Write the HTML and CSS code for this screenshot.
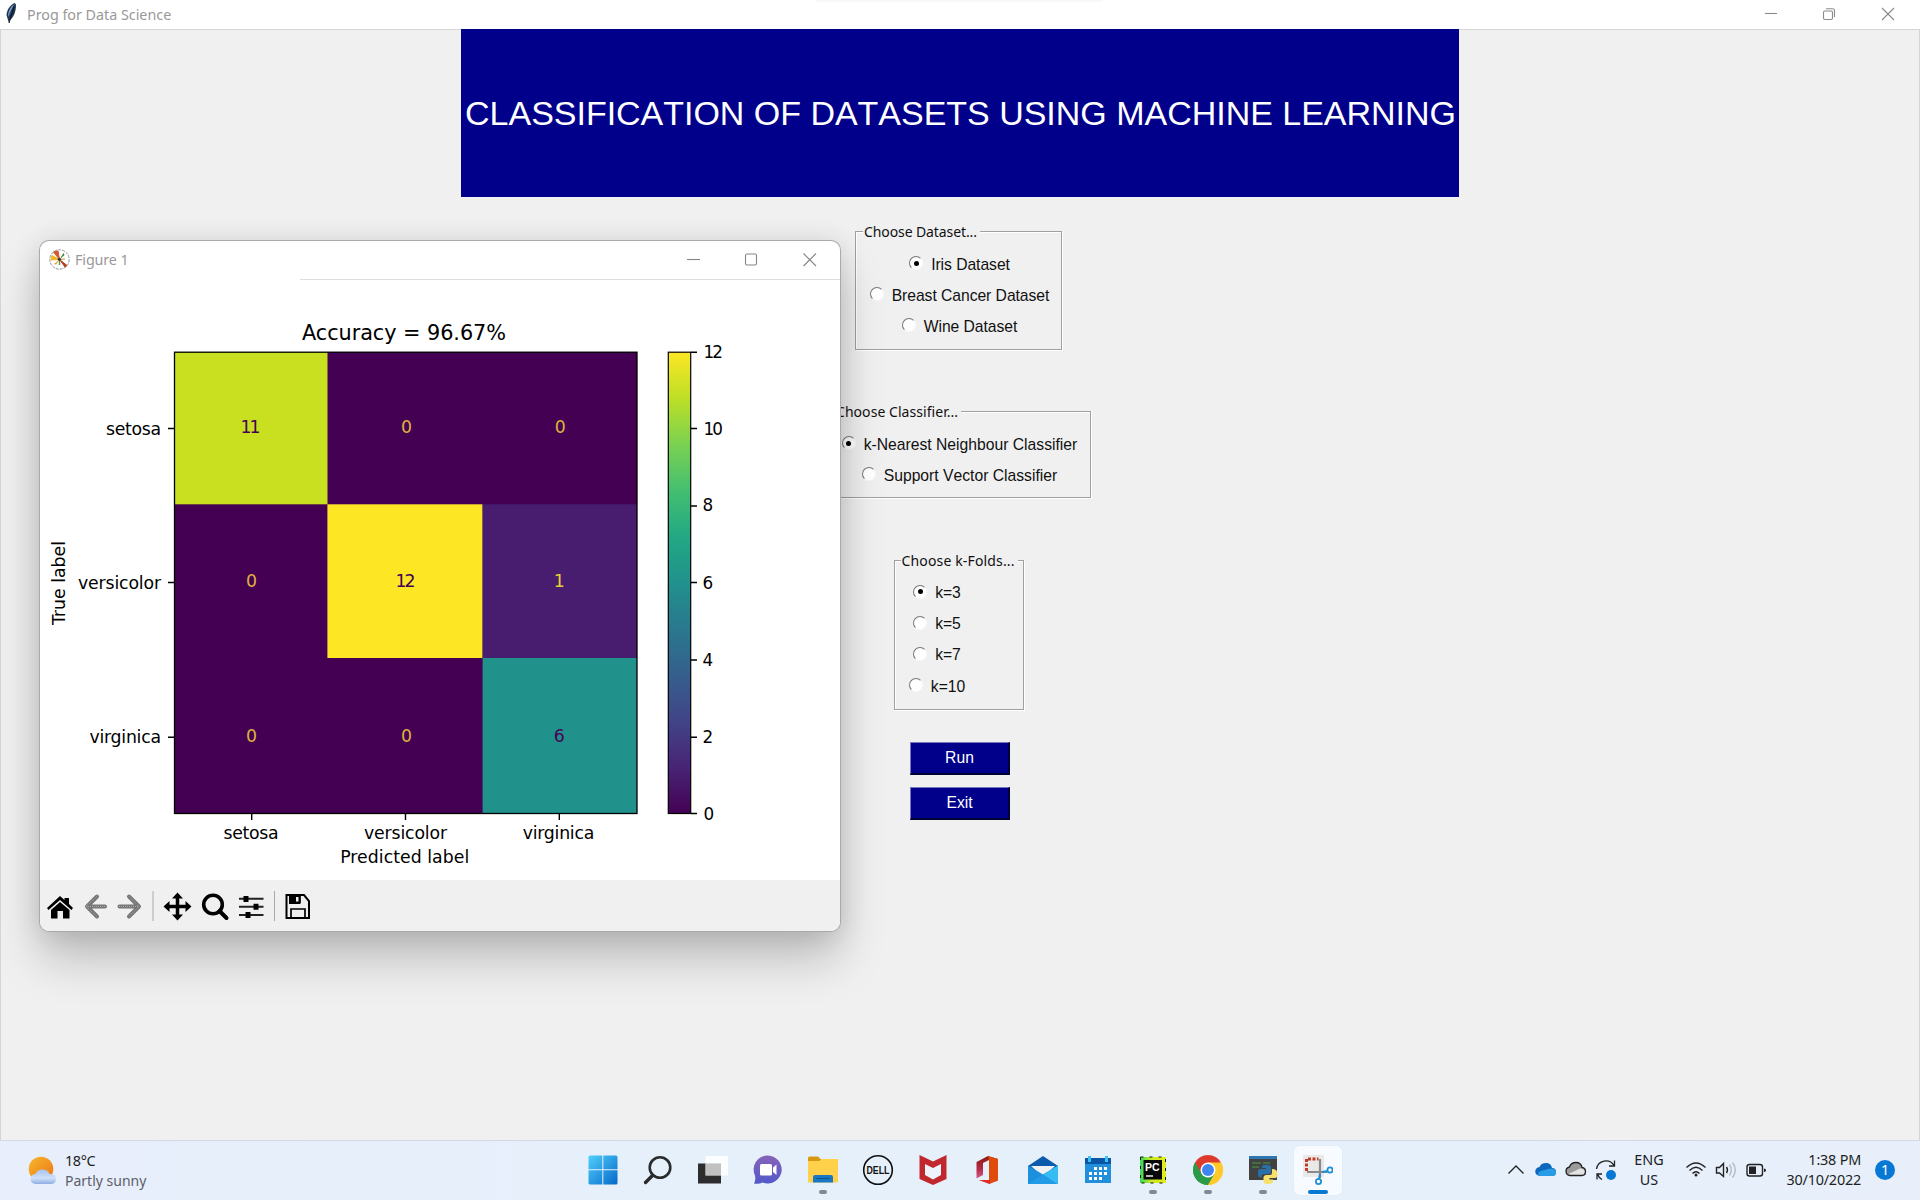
FILE: index.html
```html
<!DOCTYPE html>
<html lang="en">
<head>
<meta charset="utf-8">
<title>Prog for Data Science</title>
<link rel="stylesheet" href="styles.css">
</head>
<body>
<div class="desktop">
  <header class="titlebar">
    <svg class="feather" width="13" height="22" viewBox="0 0 13 22"><path d="M10 1C6 2 2 7 1.500 13L3 18L4 21L5 18C9 15 11 9 11 3Z" fill="#24364f"/><path d="M9.500 2C5 5 3 10 3 15C5 12 6 7 9.500 2Z" fill="#6fa3d8"/><path d="M9 5L4 21" stroke="#0d131c" stroke-width="1"/></svg>
    <span class="title-text app-name">Prog for Data Science</span>
    <svg class="win-controls" width="140" height="29" viewBox="0 0 140 29" fill="none" stroke="#8a8a8a" stroke-width="1.100">
      <path d="M5 13.500H17"/><rect x="63.500" y="11" width="9" height="8.500" rx="1.500"/><path d="M66 8.700H72.500Q74.500 8.700 74.500 10.700V17"/><path d="M122 8L134 20M134 8L122 20"/>
    </svg>
    <div class="top-peek"></div>
  </header>

  <main class="app">
    <h1 class="banner"><span>CLASSIFICATION OF DATASETS USING MACHINE LEARNING</span></h1>

    <section class="group dataset">
      <h2><span>Choose Dataset...</span></h2>
      <div class="option"><i class="radio on"></i><span>Iris Dataset</span></div>
      <div class="option"><i class="radio"></i><span>Breast Cancer Dataset</span></div>
      <div class="option"><i class="radio"></i><span>Wine Dataset</span></div>
    </section>
    <section class="group classifier">
      <h2><span>Choose Classifier...</span></h2>
      <div class="option"><i class="radio on"></i><span>k-Nearest Neighbour Classifier</span></div>
      <div class="option"><i class="radio"></i><span>Support Vector Classifier</span></div>
    </section>
    <section class="group folds">
      <h2><span>Choose k-Folds...</span></h2>
      <div class="option"><i class="radio on"></i><span>k=3</span></div>
      <div class="option"><i class="radio"></i><span>k=5</span></div>
      <div class="option"><i class="radio"></i><span>k=7</span></div>
      <div class="option"><i class="radio"></i><span>k=10</span></div>
    </section>
    <button class="action run">Run</button>
    <button class="action exit">Exit</button>
  </main>

  <section class="figure-window">
    <div class="figure-title">
      <svg class="mpl" width="21" height="21" viewBox="0 0 21 21"><circle cx="10.500" cy="10.500" r="9.700" fill="#fff" stroke="#777" stroke-width=".8" stroke-dasharray="3 1"/><path d="M10.500 10.500L4.500 3L9 2Z" fill="#d5572b" stroke="#d5572b"/><path d="M10.500 10.500L2 11L3 6.500Z" fill="#edb628" stroke="#edb628"/><path d="M10.500 10.500L16 18L18 16.500Z" fill="#b83f20" stroke="#b83f20"/><path d="M10.500 10.500L14.500 4L15.500 6Z" fill="#3e7b36"/><path d="M10.500 10.500L5 15L7 15.500Z" fill="#e19b22"/><path d="M10.500 10.500V16" stroke="#49964b" stroke-width="1.400"/><path d="M10.500 10.500L16 10" stroke="#b69c35"/><circle cx="10.300" cy="10.300" r="1.500" fill="#333"/></svg>
      <span class="title-text fig-name">Figure 1</span>
      <svg class="win-controls" width="140" height="38" viewBox="0 0 140 38" fill="none" stroke="#858585" stroke-width="1.100"><path d="M3 19.500H16"/><rect x="61.500" y="14" width="11" height="11" rx="1.500"/><path d="M119.500 13.500L132 26M132 13.500L119.500 26"/></svg>
    </div>
    <svg class="plot" width="800" height="600" viewBox="40 280 800 600">
      <defs><linearGradient id="viridis" x1="0" y1="1" x2="0" y2="0">
        <stop offset="0" stop-color="#440154"/><stop offset=".1" stop-color="#482475"/><stop offset=".2" stop-color="#414487"/><stop offset=".3" stop-color="#355f8d"/><stop offset=".4" stop-color="#2a788e"/><stop offset=".5" stop-color="#21918c"/><stop offset=".6" stop-color="#22a884"/><stop offset=".7" stop-color="#44bf70"/><stop offset=".8" stop-color="#7ad151"/><stop offset=".9" stop-color="#bddf26"/><stop offset="1" stop-color="#fde725"/>
      </linearGradient></defs>
      <rect x="174.500" y="352" width="462.500" height="461.500" fill="#440154"/>
      <rect x="174.500" y="352" width="153" height="152.300" fill="#c8e020"/>
      <rect x="327.400" y="504.300" width="155.200" height="153.700" fill="#fde725"/>
      <rect x="482.600" y="504.300" width="154.400" height="153.700" fill="#481d6f"/>
      <rect x="482.600" y="658" width="154.400" height="155.500" fill="#21918c"/>
      <rect x="174.500" y="352.200" width="462.500" height="461.300" fill="none" stroke="#000" stroke-width="1.300"/>
      <rect x="668.300" y="352.200" width="22.400" height="461.300" fill="url(#viridis)" stroke="#000" stroke-width="1.200"/>
      <path d="M168 428.500H174M168 582.500H174M168 737.300H174M251.700 814V820M405.500 814V820M559.300 814V820M691 352.300H697M691 428.500H697M691 506H697M691 582.500H697M691 660H697M691 737.300H697M691 813.500H697" stroke="#000" stroke-width="1.400"/>
      <text class="p-title" x="404" y="339.800" text-anchor="middle" textLength="204">Accuracy = 96.67%</text>
      <g class="p-text" text-anchor="end">
        <text x="161" y="435.300" textLength="55">setosa</text><text x="161" y="589" textLength="83">versicolor</text><text x="161" y="743" textLength="71.500">virginica</text>
      </g>
      <g class="p-text" text-anchor="middle">
        <text x="251" y="839.400" textLength="55">setosa</text><text x="405.500" y="839.400" textLength="83">versicolor</text><text x="558.500" y="839.400" textLength="71.500">virginica</text>
        <text x="404.700" y="863" textLength="129">Predicted label</text>
        <text transform="translate(65 583) rotate(-90)" textLength="84">True label</text>
      </g>
      <g class="p-text tick">
        <text x="703.500" y="358" textLength="19.500">12</text><text x="703.500" y="435" textLength="19.500">10</text><text x="702.500" y="511.300">8</text><text x="702.500" y="588.700">6</text><text x="702.500" y="666">4</text><text x="702.500" y="743">2</text><text x="703.500" y="820">0</text>
      </g>
      <g class="p-text" text-anchor="middle">
        <g fill="#440154"><text x="250.500" y="433" textLength="20">11</text><text x="405.500" y="587" textLength="20">12</text><text x="559.300" y="742">6</text></g>
        <g fill="#fde725"><text class="zero" x="406.500" y="433">0</text><text class="zero" x="560.300" y="433">0</text><text class="zero" x="251.500" y="587">0</text><text class="one" x="559.300" y="587">1</text><text class="zero" x="251.500" y="742">0</text><text class="zero" x="406.500" y="742">0</text></g>
      </g>
    </svg>
    <svg class="toolbar" width="800" height="51" viewBox="40 880 800 51">
      <path d="M47 908L60 896L64.500 900V898H69V904L73 908L71.500 910L60 900L48.500 910Z M51 910L60 902L69.500 910V918.500H63V911H57.500V918.500H51Z"/>
      <g fill="none" stroke="#777" stroke-width="4" stroke-linecap="round" stroke-linejoin="round"><path d="M105 906.500H87M97 896.500L87 906.500L97 916.500M119.500 906.500H138M129 896.500L139 906.500L129 916.500"/></g>
      <g fill="none" stroke="#aaa" stroke-width="1" stroke-dasharray="1 1"><path d="M105 906.500H86M97 896.500L86 906.500L97 916.500M119 906.500H139M129 896.500L139 906.500L129 916.500"/></g>
      <path d="M153 891V921M274.500 891V921" stroke="#aaa"/>
      <path d="M166 906.500H189M177.500 895V918" stroke="#000" stroke-width="3.500"/><path d="M177.500 892.500L183 898.500H172ZM177.500 920.500L183 914.500H172ZM163.500 906.500L169.500 901V912ZM191.500 906.500L185.500 901V912Z"/>
      <circle cx="213" cy="904.500" r="9.300" fill="none" stroke="#000" stroke-width="3.600"/><path d="M219.500 911L226.500 918" stroke="#000" stroke-width="4" stroke-linecap="round"/>
      <path d="M239 898.800H263.500M239 906.800H263.500M239 915H263.500" stroke="#222" stroke-width="1.900"/><path d="M243.500 896h5v6h-5zM253.500 903.800h5v6h-5zM245.500 912h5v6h-5z"/>
      <path d="M286.500 895H304L309 901V918H286.500Z" fill="none" stroke="#000" stroke-width="2"/><path d="M289 895H300V904H289Z"/><path d="M296 897H298.500V901.500H296Z" fill="#eee"/><path d="M300 896V903.500M291 918V909H305V918" fill="none" stroke="#000" stroke-width="1.700"/>
    </svg>
  </section>

  <footer class="taskbar">
    <div class="weather">
      <svg width="30" height="32" viewBox="0 0 30 32"><defs><linearGradient id="sun" x1="0" x2="1" y2="1"><stop stop-color="#f5b82d"/><stop offset="1" stop-color="#ef7414"/></linearGradient><linearGradient id="cl" x2="0" y2="1"><stop stop-color="#a9c3f0"/><stop offset=".6" stop-color="#cfe0fa"/><stop offset="1" stop-color="#8eaee4"/></linearGradient></defs><circle cx="13" cy="14" r="12.300" fill="url(#sun)"/><path d="M7.500 29A5 5 0 0 1 7.500 19Q9 14.500 14.500 14.500Q20 14.500 21.500 19Q28 19 28 24Q28 29 22.500 29Z" fill="url(#cl)"/></svg>
      <div class="weather-text"><span class="temp">18°C</span><span class="sky">Partly sunny</span></div>
    </div>
    <nav class="pins">
      <div class="pin"><svg width="30" height="30" viewBox="0 0 30 30"><defs><linearGradient id="wn" x2="1" y2="1"><stop stop-color="#4fd0fb"/><stop offset="1" stop-color="#0668c9"/></linearGradient></defs><path d="M.5 2Q.500.500 2 .5H14.300V14.300H.5ZM15.300.500H28Q29.500.500 29.500 2V14.300H15.300ZM.5 15.300H14.300V29.500H2Q.5 29.500.500 28ZM15.300 15.300H29.500V28Q29.500 29.500 28 29.500H15.300Z" fill="url(#wn)"/></svg></div>
      <div class="pin"><svg width="30" height="30" viewBox="0 0 30 30" fill="none" stroke="#2b2b2b"><circle cx="17" cy="12.500" r="10.300" stroke-width="2.600"/><path d="M9.500 20.500L2.500 27.500" stroke-width="3.300" stroke-linecap="round"/></svg></div>
      <div class="pin"><svg width="30" height="30" viewBox="0 0 30 30"><path d="M0 8.500H23V28.500H0Z" fill="#2d2d2d"/><path d="M7.500 1H30V20.500H7.500Z" fill="#fff" opacity=".83"/><path d="M7.500 8.500H23V20.500H7.500Z" fill="#b8b8b8" opacity=".75"/></svg></div>
      <div class="pin"><svg width="30" height="30" viewBox="0 0 30 30"><defs><linearGradient id="ch" x2="0" y2="1"><stop stop-color="#8a62b9"/><stop offset="1" stop-color="#5059c9"/></linearGradient></defs><path d="M15 .5A14 14 0 1 1 9.500 27.500Q6 29.500 1 28.500Q3 25 2 20.500A14 14 0 0 1 15 .5Z" fill="url(#ch)"/><rect x="7" y="9" width="12" height="11.500" rx="1.500" fill="#fff"/><path d="M20 12.500L23.500 9.500V20L20 17Z" fill="#fff"/></svg></div>
      <div class="pin open"><svg width="30" height="30" viewBox="0 0 30 30"><path d="M0 3Q0 1.500 1.500 1.500H10L13 4.500H20V9H0Z" fill="#d7970e"/><path d="M0 6H11L14 4H30V27.500H0Z" fill="#ffd04a"/><path d="M5 27.500V22Q5 20 7 20H23Q25 20 25 22V27.500Z" fill="#1878c4"/><path d="M8.500 23.500H21.500" stroke="#0e518d"/></svg></div>
      <div class="pin"><svg width="32" height="32" viewBox="0 0 32 32"><circle cx="16" cy="16" r="14.300" fill="none" stroke="#111" stroke-width="1.600"/><text x="16" y="19.500" class="dell" text-anchor="middle" textLength="23" lengthAdjust="spacingAndGlyphs">DELL</text></svg></div>
      <div class="pin"><svg width="30" height="32" viewBox="0 0 30 32"><path d="M1.500 1L15 7.500L28.500 1V25L15 31L1.500 25Z" fill="#c0282d"/><path d="M7 10L15 14L23 10V21L15 25.500L7 21Z" fill="#edf3fa"/></svg></div>
      <div class="pin"><svg width="30" height="30" viewBox="0 0 30 30"><defs><linearGradient id="of" x2="0" y2="1"><stop stop-color="#8b1a12"/><stop offset=".5" stop-color="#b92d4c"/><stop offset="1" stop-color="#e37cb5"/></linearGradient></defs><path d="M3.500 7L15 1L25 4V25.500L16 29L6 25H16V5L10 8V20L3.500 23.500Z" fill="url(#of)"/><path d="M15 1L25 4V25.500L16 29V5Z" fill="#e04a0b"/><path d="M6 25H17V29Z" fill="#df2d21"/></svg></div>
      <div class="pin"><svg width="30" height="30" viewBox="0 0 30 30"><path d="M0 11L15 1L30 11V16H0Z" fill="#0b5aab"/><path d="M3 11H27L15 22Z" fill="#eef2f5"/><path d="M0 10.500L15 19.500L30 10.500V29H0Z" fill="#1c8fdd"/><path d="M15 19.500L30 10.500V29H29Z" fill="#35bdf3"/><path d="M0 29L15 19.500L29 29Z" fill="#229be6"/></svg></div>
      <div class="pin"><svg width="28" height="30" viewBox="0 0 28 30"><path d="M1 3H27V28H1Z" fill="#218fdc"/><path d="M1 3H27V9H1Z" fill="#0c56a6"/><path d="M4 1h3v6H4zM21 1h3v6h-3z" fill="#39c2f5"/><path d="M10 12h3v3h-3zM15 12h3v3h-3zM20 12h3v3h-3zM5 17h3v3H5zM10 17h3v3h-3zM15 17h3v3h-3zM20 17h3v3h-3zM5 22h3v3H5zM10 22h3v3h-3zM15 22h3v3h-3z" fill="#fff"/></svg></div>
      <div class="pin open"><svg width="28" height="30" viewBox="0 0 28 30"><defs><linearGradient id="pc" x2="1"><stop stop-color="#35d65e"/><stop offset=".45" stop-color="#cde922"/><stop offset="1" stop-color="#e1ee1b"/></linearGradient></defs><path d="M1 2H27V28H1Z" fill="url(#pc)"/><path d="M1.500 2V28H26.500V2Z" fill="none" stroke="#131a06" stroke-dasharray="3 6"/><path d="M4.500 5H23V24.500H4.500Z" fill="#080808"/><text class="pc" x="6" y="15.500">PC</text><path d="M7 21H14" stroke="#fff" stroke-width="1.400"/></svg></div>
      <div class="pin open"><svg width="32" height="32" viewBox="0 0 32 32"><path d="M16 16L3.010 8.500A15 15 0 0 1 29 8.500Z" fill="#df382d"/><path d="M16 16L29 8.500A15 15 0 0 1 16 31Z" fill="#ffc929"/><path d="M16 16V31A15 15 0 0 1 3.010 8.500Z" fill="#2a9c49"/><path d="M16 8.500H29A15 15 0 0 1 16 31L22.500 19.700Z" fill="#ffc929"/><path d="M3.010 8.500L9.500 19.700L16 8.500Z" fill="#df382d"/><path d="M3.010 8.500L9.500 19.700L16 31A15 15 0 0 1 3.010 8.500Z" fill="#2a9c49"/><path d="M9.500 19.700L16 31L22.500 19.700Z" fill="#2a9c49"/><circle cx="16" cy="16" r="7.500" fill="#fff"/><circle cx="16" cy="16" r="6" fill="#4084f0"/></svg></div>
      <div class="pin open"><svg width="30" height="30" viewBox="0 0 30 30"><path d="M1 1H29V25H1Z" fill="#414141"/><path d="M1 1H29V4H1Z" fill="#2f77b3"/><path d="M4 8H13M4 12H11M15 8H22" stroke="#479d47"/><path d="M10 19V16Q10 14 12.500 14H18V13H14V11Q15 9.500 18.500 10Q23 10 23 12V17Q23 19 20.500 19H16Q13.500 19 13.500 22.500Q10 23 10 19Z" fill="#2a70a8"/><path d="M24 14Q29.500 14 29.500 19Q29.500 23 27 23H21.500V24.500H25V27Q24 29 20 29Q15.500 29 15.500 26.500V22.500Q15.500 20 18.500 20H22Q24 20 24 18Z" fill="#f7df6b"/></svg></div>
      <div class="pin active"><svg width="30" height="30" viewBox="0 0 30 30"><path d="M0 0H21V22H0Z" fill="#e9e9e9"/><path d="M3.500 16V4H15.500" fill="none" stroke="#c53a23" stroke-width="3" stroke-dasharray="3 1.500"/><path d="M4 17H24M17 4V23" stroke="#8a8a8a" stroke-width="2.200"/><path d="M19 17L25 16M17 19L16 24" stroke="#218fd4" stroke-width="2"/><circle cx="27" cy="15" r="2.600" fill="none" stroke="#218fd4" stroke-width="1.800"/><circle cx="15.500" cy="26.500" r="2.600" fill="none" stroke="#218fd4" stroke-width="1.800"/></svg></div>
    </nav>
    <div class="tray">
      <svg width="134" height="40" viewBox="1500 1150 134 40" fill="none"><path d="M1508.500 1173.500L1516 1166L1523.500 1173.500" stroke="#222" stroke-width="1.300"/><path d="M1540 1176A4.500 4.500 0 0 1 1539.500 1167Q1541 1163 1546 1163Q1551 1163 1552 1168Q1556 1168 1556 1172Q1556 1176 1552 1176Z" fill="#0b68bd"/><path d="M1538.500 1176Q1537 1172 1541 1171L1550 1168.500Q1556 1168.500 1556 1172.500Q1556 1176 1552 1176Z" fill="#279be6"/><path d="M1570 1175.500A4.300 4.300 0 0 1 1569.500 1167Q1571 1162.500 1576 1162.500Q1581 1162.500 1582 1167.500Q1585.500 1168 1585.500 1171.500Q1585.500 1175.500 1582 1175.500Z" fill="#9b9b9b" stroke="#222" stroke-width="1.300"/><path d="M1568.500 1174L1580 1168.500Q1584.500 1168.500 1584.500 1171.500Q1584.500 1174.500 1582 1174.500H1570Z" fill="#e3e3e3"/><g stroke="#222" stroke-width="1.300"><path d="M1596.500 1169A9.500 9.500 0 0 1 1614 1165.500M1614.500 1160.500V1166H1609M1602 1179.500A9.500 9.500 0 0 1 1597.500 1174M1597 1179.500V1174H1602"/></g><circle cx="1611" cy="1175" r="5" fill="#0878d5"/></svg>
      <div class="lang"><span>ENG</span><span>US</span></div>
      <svg width="92" height="40" viewBox="1680 1150 92 40" fill="none" stroke="#222" stroke-width="1.400"><path d="M1686.500 1167.500Q1696 1158.500 1705.500 1167.500M1689.500 1170.500Q1696 1164 1702.500 1170.500M1692.500 1173.500Q1696 1170 1699.500 1173.500"/><circle cx="1696" cy="1175" r="1.500" fill="#222" stroke="none"/><path d="M1716.500 1167.500H1719.500L1723.500 1163.500V1176.500L1719.500 1173H1716.500Z"/><path d="M1726.500 1167Q1728.500 1170 1726.500 1173"/><path d="M1729.500 1164.500Q1733 1170 1729.500 1175.500M1732.500 1162.500Q1738 1170 1732.500 1177.500" stroke="#b5bac2"/><rect x="1747" y="1164.500" width="15.500" height="11.500" rx="2.500"/><path d="M1749 1166.500H1756V1174H1749Z" fill="#222" stroke="none"/><path d="M1764 1168.500Q1766 1168.500 1766 1170.300T1764 1172Z" fill="#222" stroke="none"/></svg>
      <div class="clock"><span class="time">1:38 PM</span><span class="date">30/10/2022</span></div>
      <span class="badge">1</span>
    </div>
  </footer>
</div>
</body>
</html>
```
FILE: styles.css
```css
* { box-sizing: border-box; }
body { margin: 0; overflow: hidden; }
svg { display: block; flex: none; }
.desktop { position: relative; width: 1920px; height: 1200px; display: flex; flex-direction: column; background: #f0f0f0; font-family: "Noto Sans", sans-serif; }
.titlebar { position: relative; height: 29px; flex: none; display: flex; align-items: center; padding: 0 20px 0 5px; background: #fff; }
.feather { margin: 0 9px 4px 0; }
.title-text { color: #999; white-space: nowrap; }
.app-name { font-size: 14.300px; }
.win-controls { margin-left: auto; }
.top-peek { position: absolute; left: 815px; top: 0; width: 288px; height: 2px; background: #f8f8f8; border-radius: 0 0 8px 8px; }
.app { flex: 1; display: flex; flex-direction: column; align-items: center; border: 1px solid #d3d6d3; border-bottom: 0; }
.banner { width: 998px; height: 167.500px; margin: -1px 0 0; padding: 1px 0 0 1px; display: flex; align-items: center; justify-content: center; background: #00008b; color: #fff; font: 34px "Liberation Sans", sans-serif; font-kerning: none; letter-spacing: -.02px; white-space: nowrap; }
.group { margin-right: 3px; border: 1px solid #a0a0a0; box-shadow: 1px 1px #fff, inset 1px 1px #fff; display: flex; flex-direction: column; align-items: center; font: 15.700px "Liberation Sans", sans-serif; font-kerning: none; letter-spacing: -.05px; color: #111; }
.group h2 { align-self: flex-start; height: 17px; margin: -9px 0 0 6px; padding: 0 2px; background: #f0f0f0; font: 14px/18px "Noto Sans", sans-serif; white-space: nowrap; }
.group h2 span { position: relative; left: -1px; }
.option { height: 31.200px; display: flex; align-items: center; gap: 8px; padding-top: 2px; white-space: nowrap; }
.dataset { width: 207px; height: 119px; margin-top: 34.500px; padding-left: 2px; }
.dataset h2 { letter-spacing: -.1px; margin-left: 5px; }
.classifier { width: 263px; height: 87px; margin: 61px 1px 0 0; }
.classifier .option { letter-spacing: 0; }
.classifier h2 { letter-spacing: .05px; }
.folds { width: 130px; height: 150px; margin-top: 61.500px; }
.folds h2 { letter-spacing: .15px; }
.folds .option { margin-right: 43px; }
.group h2 + .option { margin-top: 8px; }
.radio { width: 14px; height: 14px; margin-bottom: 3px; border-radius: 50%; background: #fff; border: 1.500px solid; border-color: #777 #f8f8f8 #f8f8f8 #777; display: grid; place-items: center; }
.radio.on::after { content: ""; width: 5px; height: 5px; border-radius: 50%; background: #000; }
.action { width: 100px; height: 33px; padding: 0; background: #00008b; color: #fff; border: 1px solid; border-width: 1px 2px 2px 1px; border-color: #7777c0 #000033 #000033 #7777c0; font: 15.700px "Liberation Sans", sans-serif; }
.run { margin-top: 32px; }
.exit { margin-top: 12px; }

.figure-window { position: absolute; left: 40px; top: 241px; width: 800px; height: 690px; background: #fff; border-radius: 9px; overflow: hidden; box-shadow: 0 0 0 1px #aaa, 0 28px 46px rgba(0,0,0,.21), 0 2px 28px rgba(0,0,0,.12); }
.figure-title { height: 39px; display: flex; align-items: center; padding: 0 16px 3px 9px; background: linear-gradient(#dedede,#dedede) 260px 38px / 540px 1px no-repeat; }
.fig-name { font-size: 14.300px; margin-left: 5px; letter-spacing: -.1px; }
.p-text { font: 17.300px "DejaVu Sans", sans-serif; }
.p-title { font: 20.800px "DejaVu Sans", sans-serif; }
.tick { font-size: 16.800px; }
.zero { fill: #dfb13c; }
.one { fill: #e9cf30; }
.toolbar { background: #f0f0f0; }

.taskbar { height: 60px; flex: none; border-top: 1px solid #d2d8e4; background: linear-gradient(90deg, #e8eefb, #e6f0fb 35%, #e6f0fb 75%, #e8effb); display: flex; align-items: center; color: #1d1f24; }
.weather { width: 575px; display: flex; align-items: center; padding: 0 0 0 28px; gap: 7px; }
.weather-text { display: flex; flex-direction: column; font-size: 14.400px; line-height: 20px; }
.temp { letter-spacing: -.4px; }
.sky { color: #5b5f68; font-size: 14px; }
.pins { display: flex; height: 60px; }
.pin { position: relative; width: 55px; display: grid; place-items: center; padding-bottom: 2px; }
.open::after, .active::after { content: ""; position: absolute; left: 24px; bottom: 7px; width: 8px; height: 4px; border-radius: 2px; background: #848991; }
.active::after { left: 18px; width: 20px; background: #0878d3; }
.active::before { content: ""; position: absolute; left: 4px; top: 5px; width: 48px; height: 49px; border-radius: 5px; background: #f7faff; box-shadow: 0 0 1px #cbd0da; }
.active svg { position: relative; }
.dell { font: bold 10px "Liberation Sans", sans-serif; fill: #111; }
.pc { font: bold 10.500px "Liberation Sans", sans-serif; fill: #fff; }
.tray { margin-left: auto; width: 420px; display: flex; align-items: center; padding-bottom: 1px; font-size: 14.400px; line-height: 20px; }
.lang { width: 30px; margin-right: 16px; display: flex; flex-direction: column; align-items: center; }
.clock { width: 89px; display: flex; flex-direction: column; align-items: flex-end; white-space: nowrap; }
.time, .date { letter-spacing: -.2px; }
.badge { width: 20px; height: 20px; margin-left: 14px; border-radius: 50%; background: #0878d5; color: #fff; text-align: center; }
```
